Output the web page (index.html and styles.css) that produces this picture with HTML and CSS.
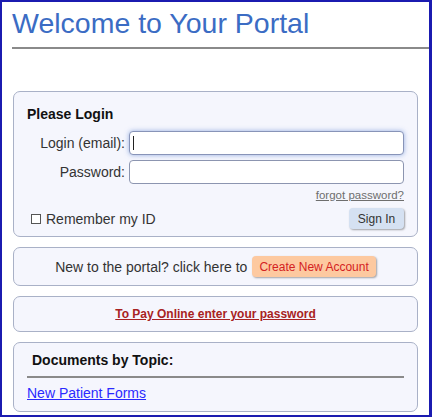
FILE: index.html
```html
<!DOCTYPE html>
<html>
<head>
<meta charset="utf-8">
<link rel="stylesheet" href="styles.css">
</head>
<body>
<div class="frame">
  <h1 class="title">Welcome to Your Portal</h1>
  <div class="rule"></div>

  <div class="box login">
    <div class="heading">Please Login</div>
    <div class="form-row">
      <label class="label">Login (email):</label>
      <div class="field focused"><input class="input" type="text"><span class="caret"></span></div>
    </div>
    <div class="form-row">
      <label class="label">Password:</label>
      <div class="field"><input class="input" type="password"></div>
    </div>
    <div class="forgot-row"><a class="forgot">forgot password?</a></div>
    <div class="bottom-row">
      <div class="remember"><span class="check"></span><span>Remember my ID</span></div>
      <button class="signin">Sign In</button>
    </div>
  </div>

  <div class="box newacct">
    <span class="new-text">New to the portal? click here to</span>
    <button class="create">Create New Account</button>
  </div>

  <div class="box pay">
    <a class="pay-link">To Pay Online enter your password</a>
  </div>

  <div class="box docs">
    <div class="docs-heading">Documents by Topic:</div>
    <div class="docs-rule"></div>
    <a class="docs-link">New Patient Forms</a>
  </div>
</div>
</body>
</html>
```
FILE: styles.css
```css
html, body {
  margin: 0;
  padding: 0;
  background: #ffffff;
}
body {
  font-family: "Liberation Sans", Arial, sans-serif;
  color: #222;
}
.frame {
  width: 432px;
  height: 417px;
  box-sizing: border-box;
  border: 2px solid #1b1bb0;
  border-right-width: 3px;
  display: flex;
  flex-direction: column;
  overflow: hidden;
}
.title {
  margin: 5px 0 0 10px;
  font-size: 28.5px;
  line-height: 32px;
  font-weight: normal;
  color: #3b6cc4;
  white-space: nowrap;
}
.rule {
  margin: 8px 0 0 10px;
  height: 2px;
  background: #8a8a8a;
}
.box {
  margin: 0 11px;
  border: 1px solid #a9b1c7;
  border-radius: 7px;
  background: #f5f6fd;
  box-sizing: border-box;
}
.login {
  margin-top: 42px;
  height: 146px;
  padding: 14px 13px 0 13px;
  display: flex;
  flex-direction: column;
}
.heading {
  font-size: 14px;
  line-height: 16px;
  font-weight: bold;
  color: #111;
}
.form-row {
  display: grid;
  grid-template-columns: 98px 1fr;
  column-gap: 4px;
  align-items: center;
  margin-top: 5px;
}
.heading + .form-row { margin-top: 9px; }
.label {
  text-align: right;
  font-size: 14px;
  line-height: 16px;
  color: #333;
  white-space: nowrap;
}
.field {
  position: relative;
  height: 24px;
}
.input {
  display: block;
  width: 100%;
  height: 24px;
  box-sizing: border-box;
  border: 1px solid #8c95b0;
  border-radius: 4px;
  background: #fff;
  margin: 0;
  padding: 0 4px;
  font-family: inherit;
  font-size: 13px;
  outline: none;
}
.focused .input {
  border-color: #8894b8;
  box-shadow: 0 0 5px rgba(110, 145, 215, 0.7);
}
.caret {
  position: absolute;
  left: 4px;
  top: 5px;
  width: 1px;
  height: 14px;
  background: #222;
}
.forgot-row {
  display: flex;
  justify-content: flex-end;
  margin-top: 5px;
}
.forgot {
  font-size: 11.5px;
  line-height: 13px;
  color: #6e6e6e;
  text-decoration: underline;
}
.bottom-row {
  display: flex;
  justify-content: space-between;
  align-items: center;
  margin-top: 6px;
}
.remember {
  display: flex;
  align-items: center;
  gap: 5px;
  padding-left: 4px;
  font-size: 14px;
  line-height: 16px;
  color: #333;
}
.check {
  width: 8px;
  height: 8px;
  border: 1px solid #555;
  background: #fff;
  margin-top: 1px;
}
.signin {
  width: 55px;
  height: 21px;
  border: none;
  border-radius: 4px;
  background: #d5e1f2;
  box-shadow: 1px 1px 2px rgba(0, 0, 0, 0.35);
  font-family: inherit;
  font-size: 12px;
  color: #333;
  padding: 0;
}
.newacct {
  margin-top: 10px;
  height: 39px;
  display: flex;
  justify-content: center;
  align-items: center;
  gap: 5px;
}
.new-text {
  font-size: 14px;
  line-height: 16px;
  color: #333;
}
.create {
  height: 21px;
  padding: 0 7px;
  border: none;
  border-radius: 4px;
  background: #fdc9a0;
  box-shadow: 1px 1px 2px rgba(0, 0, 0, 0.35);
  font-family: inherit;
  font-size: 12px;
  color: #d42222;
}
.pay {
  margin-top: 10px;
  height: 36px;
  display: flex;
  justify-content: center;
  align-items: center;
}
.pay-link {
  font-size: 12px;
  line-height: 14px;
  font-weight: bold;
  color: #a82222;
  text-decoration: underline;
}
.docs {
  margin-top: 10px;
  height: 70px;
  padding: 9px 13px 0 13px;
  display: flex;
  flex-direction: column;
  align-items: flex-start;
}
.docs-heading {
  margin-left: 5px;
  font-size: 14px;
  line-height: 16px;
  font-weight: bold;
  color: #111;
}
.docs-rule {
  align-self: stretch;
  height: 2px;
  margin-top: 8px;
  background: #8a8a8a;
}
.docs-link {
  margin-top: 7px;
  font-size: 14px;
  line-height: 16px;
  color: #2a2aff;
  text-decoration: underline;
}
```
